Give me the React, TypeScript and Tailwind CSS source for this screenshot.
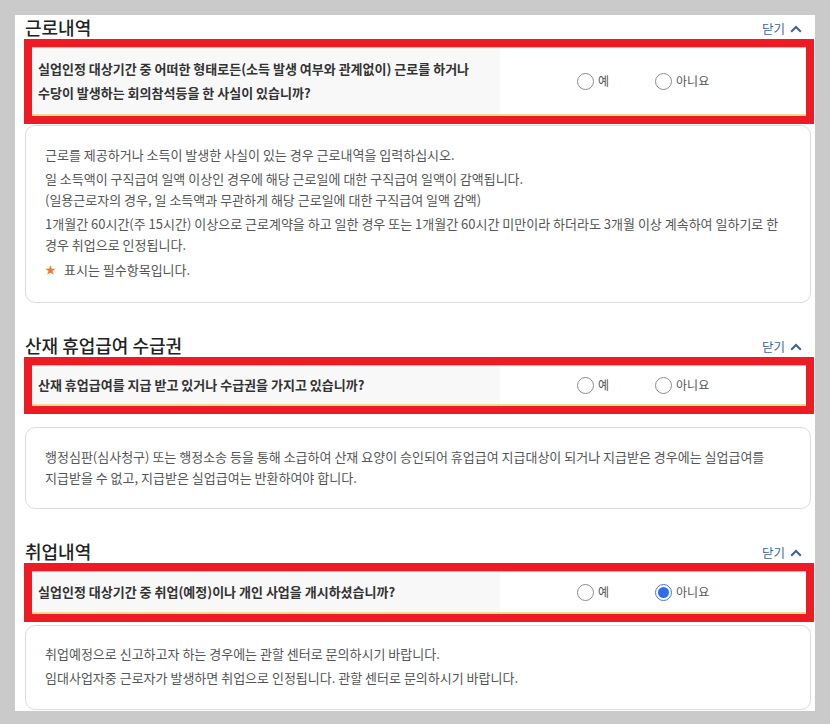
import React from 'react';

type Section = {
  title: string;
  question: string[];
  answer: 'yes' | 'no' | null;
  rowPad: string;
  notes: string[][];
  noteBoxClass: string;
  star?: boolean;
};

const sections: Section[] = [
  {
    title: '근로내역',
    question: [
      '실업인정 대상기간 중 어떠한 형태로든(소득 발생 여부와 관계없이) 근로를 하거나',
      '수당이 발생하는 회의참석등을 한 사실이 있습니까?'
    ],
    answer: null,
    rowPad: 'py-[9px]',
    notes: [
      ['근로를 제공하거나 소득이 발생한 사실이 있는 경우 근로내역을 입력하십시오.'],
      [
        '일 소득액이 구직급여 일액 이상인 경우에 해당 근로일에 대한 구직급여 일액이 감액됩니다.',
        '(일용근로자의 경우, 일 소득액과 무관하게 해당 근로일에 대한 구직급여 일액 감액)'
      ],
      [
        '1개월간 60시간(주 15시간) 이상으로 근로계약을 하고 일한 경우 또는 1개월간 60시간 미만이라 하더라도 3개월 이상 계속하여 일하기로 한',
        '경우 취업으로 인정됩니다.'
      ]
    ],
    noteBoxClass: 'mt-px pt-[18px] pb-[22px]',
    star: true
  },
  {
    title: '산재 휴업급여 수급권',
    question: ['산재 휴업급여를 지급 받고 있거나 수급권을 가지고 있습니까?'],
    answer: null,
    rowPad: 'py-[7px]',
    notes: [
      [
        '행정심판(심사청구) 또는 행정소송 등을 통해 소급하여 산재 요양이 승인되어 휴업급여 지급대상이 되거나 지급받은 경우에는 실업급여를',
        '지급받을 수 없고, 지급받은 실업급여는 반환하여야 합니다.'
      ]
    ],
    noteBoxClass: 'mt-[13px] pt-[18px] pb-[20px]'
  },
  {
    title: '취업내역',
    question: ['실업인정 대상기간 중 취업(예정)이나 개인 사업을 개시하셨습니까?'],
    answer: 'no',
    rowPad: 'py-[8px]',
    notes: [
      ['취업예정으로 신고하고자 하는 경우에는 관할 센터로 문의하시기 바랍니다.'],
      ['임대사업자중 근로자가 발생하면 취업으로 인정됩니다. 관할 센터로 문의하시기 바랍니다.']
    ],
    noteBoxClass: 'mt-[3px] pt-[17px] pb-[21px]'
  }
];

const Radio = ({ checked, label }: { checked: boolean; label: string }) => (
  <label className="flex items-center gap-[4px]">
    {checked ? (
      <span className="flex h-[17px] w-[17px] items-center justify-center rounded-full border border-[#3f77e6] bg-white">
        <span className="h-[11px] w-[11px] rounded-full bg-[#2f6ee8]" />
      </span>
    ) : (
      <span className="h-[17px] w-[17px] rounded-full border border-[#8c8c8c] bg-white" />
    )}
    <span className="text-[12px] leading-none text-[#555]">{label}</span>
  </label>
);

const SectionBlock = ({ section, first }: { section: Section; first: boolean }) => (
  <section className={first ? '' : 'mt-[30px]'}>
    <div className="ml-[10px] mr-[13px] flex h-[24px] items-center justify-between">
      <h2 className="text-[18px] font-medium text-[#222]">{section.title}</h2>
      <button type="button" className="mt-[4px] flex items-center gap-[5px] text-[12.5px] text-[#3f5f9e]">
        닫기
        <svg width="12" height="8" viewBox="0 0 12 8" fill="none">
          <path d="M1.2 6.8 6 2l4.8 4.8" stroke="#3f5f9e" strokeWidth="2" />
        </svg>
      </button>
    </div>

    {/* question row */}
    <div className="ml-[9px] mr-px border-8 border-[#ed1c24]">
      <div className="flex border-t border-b-2 border-t-[#e6bd86] border-b-[#f3dc8c] bg-white">
        <div
          className={`w-[468px] bg-[#f8f8f8] pl-[6px] text-[13px] font-bold leading-[24px] text-[#333] ${section.rowPad}`}
        >
          {section.question.map((line) => (
            <div key={line} className="whitespace-nowrap">
              {line}
            </div>
          ))}
        </div>
        <div className="flex flex-1 items-center gap-[46px] pl-[77px]">
          <Radio checked={section.answer === 'yes'} label="예" />
          <Radio checked={section.answer === 'no'} label="아니요" />
        </div>
      </div>
    </div>

    {/* guidance box */}
    <div
      className={`ml-[10px] mr-[4px] rounded-[10px] border border-[#dcdcdc] bg-white pl-[19px] pr-5 text-[13px] leading-[21px] text-[#555] ${section.noteBoxClass}`}
    >
      {section.notes.map((para, i) => (
        <p key={i} className={i === 0 ? '' : 'mt-[3px]'}>
          {para.map((line) => (
            <span key={line} className="block whitespace-nowrap">
              {line}
            </span>
          ))}
        </p>
      ))}
      {section.star && (
        <p className="mt-[4px] flex items-center gap-[8px]">
          <span className="text-[11px] text-[#f07a2c]">★</span>
          표시는 필수항목입니다.
        </p>
      )}
    </div>
  </section>
);

export default function App() {
  return (
    <div
      className="min-h-[724px] w-[830px] bg-[#cacaca] pt-[15px]"
      style={{ fontFamily: '"Noto Sans CJK KR", "Noto Sans", sans-serif' }}
    >
      <div className="ml-[15px] w-[800px] bg-white pb-px">
        {sections.map((s, i) => (
          <SectionBlock key={s.title} section={s} first={i === 0} />
        ))}
      </div>
    </div>
  );
}
